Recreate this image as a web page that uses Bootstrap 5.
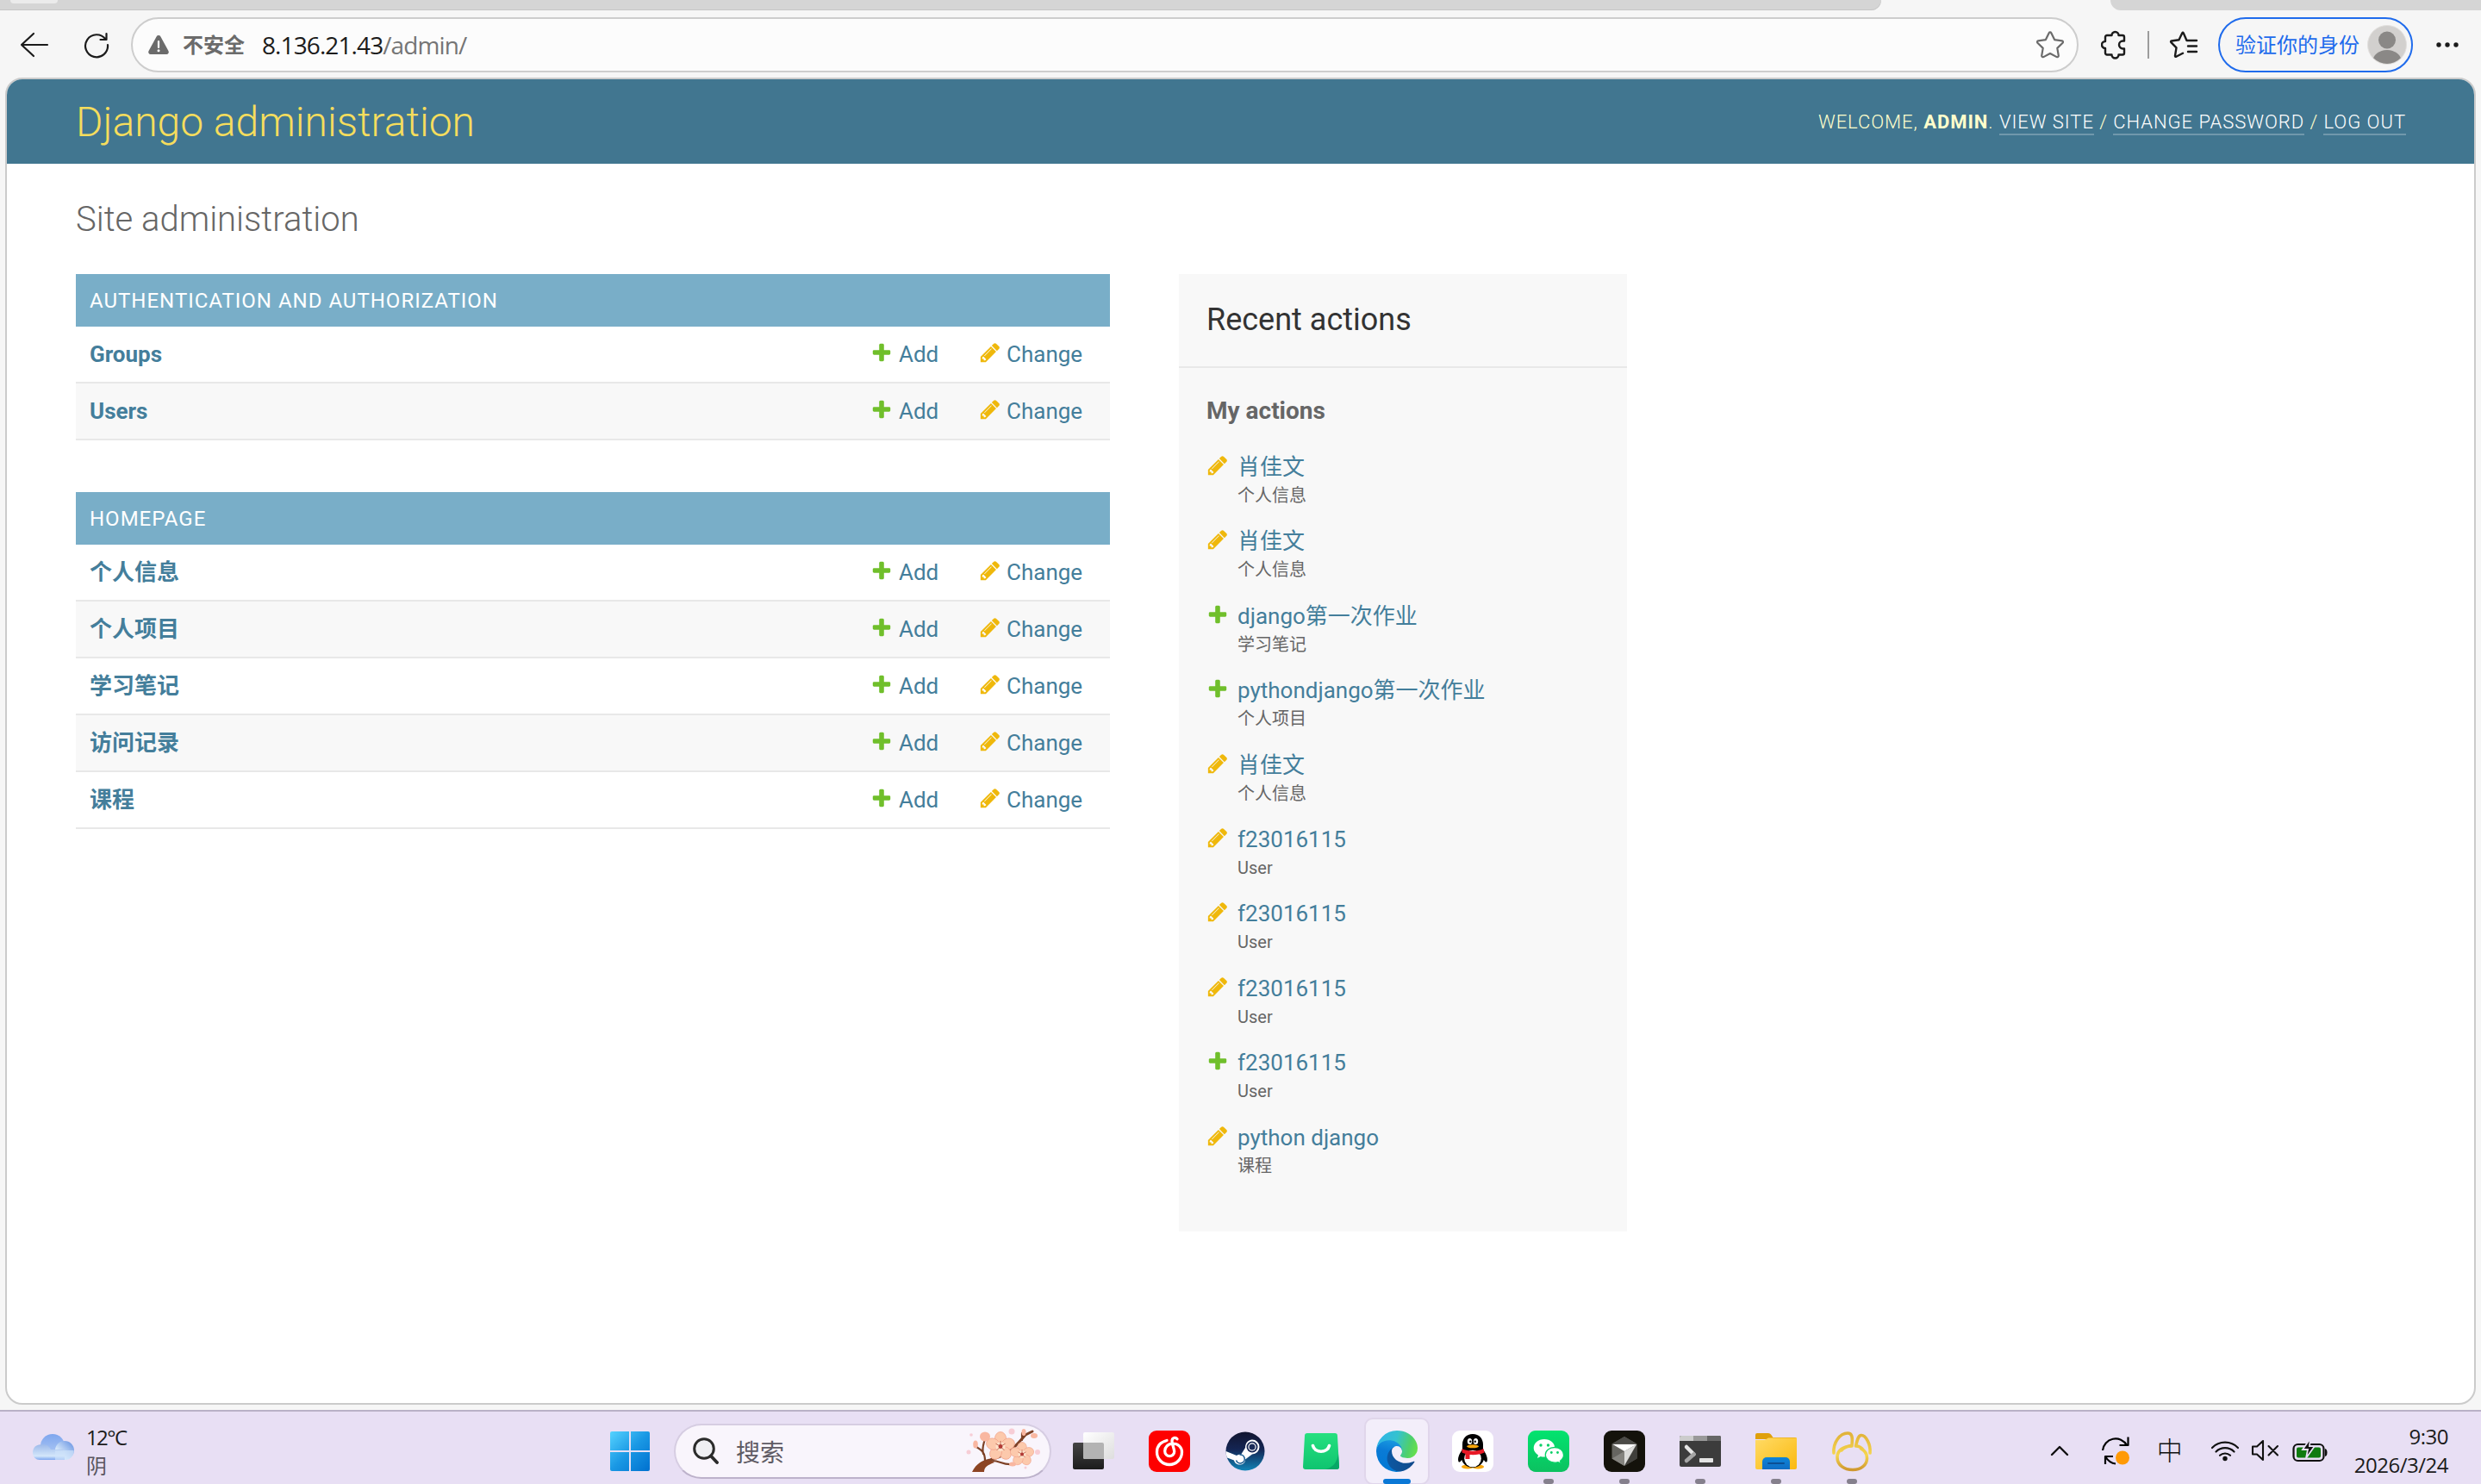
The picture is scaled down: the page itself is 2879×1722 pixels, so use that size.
<!DOCTYPE html>
<html lang="zh-CN">
<head>
<meta charset="utf-8">
<title>Site administration | Django site admin</title>
<meta name="viewport" content="width=device-width, initial-scale=1">
<link href="https://cdn.jsdelivr.net/npm/bootstrap@5.3.0/dist/css/bootstrap.min.css" rel="stylesheet">
<script defer src="https://cdn.jsdelivr.net/npm/bootstrap@5.3.0/dist/js/bootstrap.bundle.min.js"></script>
<style>
html,body{height:1722px;overflow:hidden}
body{font-family:Roboto,"Noto Sans CJK SC",sans-serif;background:#f6f6f6;color:#333;font-size:26px;line-height:1.3}
svg{display:block;flex:none}
.ui{font-family:"Open Sans","Noto Sans CJK SC",sans-serif}
/* browser chrome */
.tabstrip{height:12px;background:#f6f6f6}
.strip-left{width:2183px;background:#d5d5d5;border-bottom-right-radius:12px;box-shadow:inset 0 -1px 0 #c6c6c6}
.strip-right{width:430px;background:#d5d5d5;border-bottom-left-radius:12px}
.old-tab{width:55px;height:4px;margin-left:12px;background:#ebebeb;border-radius:0 0 10px 10px}
.toolbar{height:78px;padding-top:2px}
.addr{width:2260px;height:64px;border:2px solid #cdcdcd;border-radius:32px;background:#fcfcfc;margin-left:24px;padding:0 14px 0 17px}
.insecure{font-size:24px;font-weight:700;color:#6b6b6b;margin-left:15px;line-height:32px}
.url{font-size:28px;letter-spacing:-.9px;color:#1b1b1b;margin-left:20px;line-height:36px}
.url span{color:#757575}
.profile{width:226px;height:64px;border:2px solid #1f6bec;border-radius:32px;color:#1f6bec;font-size:24px;padding:0 5px 0 18px;line-height:32px}
/* page frame */
.frame{height:1540px;margin:0 6px 0 6px;border:2px solid #cbcbcb;border-radius:20px;background:#fff;overflow:hidden}
.dj-header{height:98px;background:#417690;padding:2px 79px 0 80px;color:#ffc}
.dj-brand{font-size:48px;font-weight:300;color:#f5dd5d;line-height:56px}
.dj-tools{font-size:22px;font-weight:300;letter-spacing:.97px;line-height:28px}
.dj-tools b{font-weight:700}
.dj-tools a{color:#fff;text-decoration:none;border-bottom:2px solid rgba(255,255,255,.25);padding-bottom:1px}
.dj-content{padding:41px 80px}
.dj-title{font-size:40px;font-weight:300;color:#666;line-height:48px;margin:0 0 39px}
.app-list{width:1200px}
.app-box{margin-bottom:60px}
.app-cap{height:61px;background:#79aec8;color:#fff;font-size:24px;letter-spacing:1px;padding:1px 16px 0;font-weight:400;margin:0}
.app-row{height:66px;border-bottom:2px solid #e8e8e8;padding:2px 0 0 16px}
.app-row:nth-child(odd){background:#f8f8f8}
.app-row a,.act a{color:#447e9b;text-decoration:none}
.app-row .nm{font-weight:700}
.lnk{gap:7px}
.lnk-add{width:126px}.lnk-chg{width:152px;gap:6px}
.ic{width:26px;height:26px}
.lnk .ic{margin-top:-5px}
.side{width:520px;height:1111px;background:#f8f8f8;margin-left:80px}
.side-h{height:109px;border-bottom:2px solid #e8e8e8;padding:1px 32px 0;font-size:36px;font-weight:400;color:#333;margin:0}
.side-b{padding:31px 32px 0}
.side-b h3{font-size:28px;font-weight:700;color:#666;line-height:38px;margin:0 0 28px}
.act{height:86.4px;gap:10px}
.act .ic{margin-top:3px}
.act a{display:block;font-size:26px;line-height:36px;height:36px}
.act .kind{font-size:20px;line-height:31px;color:#666}
/* taskbar */
.taskbar{height:86px;border-top:2px solid #b9b1c6;background:#e8dff4;margin-top:6px}
.weather{width:687px;padding-left:38px;gap:14px}
.two-line{font-size:24px;line-height:33px;color:#1b1b1b;letter-spacing:-.5px}
.weather .two-line{letter-spacing:-1.6px}
.two-line .dim{color:#5a5660}
.cell{width:88px;height:84px;padding-top:8px}
.searchbox{width:438px;height:64px;border:2px solid #d6cde2;border-bottom-color:#bdb2cb;border-radius:32px;background:#f9f5fc;margin:14px 5px 6px 7px;padding:0 9px 0 20px;font-size:28px;color:#5f5b64}
.searchbox span{margin-left:20px;line-height:36px;padding-top:2px}
.plate{left:6px;top:7px;width:76px;height:78px;background:#f3eefa;border:2px solid #e0d6eb;border-radius:10px}
.run{left:38px;bottom:0;width:12px;height:6px;border-radius:3px;background:#85808d}
.run-on{left:28px;bottom:0;width:32px;height:6px;border-radius:3px;background:#0a78d6}
.ime{font-size:30px;font-weight:300;line-height:36px;color:#111}
.tray{padding:6px 38px 0 0}
</style>
</head>
<body class="d-flex flex-column">
<svg width="0" height="0" class="position-absolute">
<defs>
<symbol id="add" viewBox="0 0 1792 1792"><path fill="#70bf2b" d="M1600 796v192q0 40-28 68t-68 28h-416v416q0 40-28 68t-68 28h-192q-40 0-68-28t-28-68v-416h-416q-40 0-68-28t-28-68v-192q0-40 28-68t68-28h416v-416q0-40 28-68t68-28h192q40 0 68 28t28 68v416h416q40 0 68 28t28 68z"/></symbol>
<symbol id="chg" viewBox="0 0 1792 1792"><path fill="#efb80b" d="M491 1536l91-91-235-235-91 91v107h128v128h107zm523-928q0-22-22-22-10 0-17 7l-542 542q-7 7-7 17 0 22 22 22 10 0 17-7l542-542q7-7 7-17zm-54-192l416 416-832 832h-416v-416zm683 96q0 53-37 90l-166 166-416-416 166-165q36-38 90-38 53 0 91 38l235 234q37 39 37 91z"/></symbol>
<symbol id="petals" viewBox="-16 -16 32 32"><g fill="#fcc9ac" stroke="#f2a48c" stroke-width=".7"><ellipse cy="-8.500" rx="6" ry="7"/><ellipse cy="-8.500" rx="6" ry="7" transform="rotate(72)"/><ellipse cy="-8.500" rx="6" ry="7" transform="rotate(144)"/><ellipse cy="-8.500" rx="6" ry="7" transform="rotate(216)"/><ellipse cy="-8.500" rx="6" ry="7" transform="rotate(288)"/></g><circle r="5" fill="#fde2cb"/><path d="M0 0V-6M0 0L5-3M0 0L4 4M0 0L-4 4M0 0L-5-3" stroke="#b5533f" stroke-width=".8"/><circle r="2.200" fill="#b23a35"/></symbol>
<linearGradient id="gw" gradientUnits="userSpaceOnUse" x1="0" y1="0" x2="46" y2="46"><stop offset="0" stop-color="#55d3ff"/><stop offset=".5" stop-color="#1a98e4"/><stop offset="1" stop-color="#0070cf"/></linearGradient>
<linearGradient id="gcl" x1="0" y1="0" x2="0" y2="1"><stop offset="0" stop-color="#7ea6ee"/><stop offset="1" stop-color="#b5cdf5"/></linearGradient>
<linearGradient id="gcl2" x1="0" y1="0" x2="0" y2="1"><stop offset="0" stop-color="#9cb9ea"/><stop offset=".75" stop-color="#d3e6fa"/><stop offset="1" stop-color="#7da6f0"/></linearGradient>
<linearGradient id="gcl3" x1="1" y1="0" x2="0" y2="1"><stop offset="0" stop-color="#5f8de0"/><stop offset=".7" stop-color="#d9eafb"/></linearGradient>
<linearGradient id="gst" x1="0" y1="0" x2="0" y2="1"><stop offset="0" stop-color="#12152f"/><stop offset=".45" stop-color="#142553"/><stop offset="1" stop-color="#1086b9"/></linearGradient>
<linearGradient id="gbag" x1="0" y1="0" x2="0" y2="1"><stop offset="0" stop-color="#26e07f"/><stop offset="1" stop-color="#0fc470"/></linearGradient>
<linearGradient id="ge1" x1="0" y1="0" x2="1" y2="0"><stop offset="0" stop-color="#0c59a4"/><stop offset="1" stop-color="#114a8b"/></linearGradient>
<linearGradient id="ge2" x1=".6" y1="0" x2=".4" y2="1"><stop offset="0" stop-color="#1b9de2"/><stop offset=".4" stop-color="#0a7bd6"/><stop offset="1" stop-color="#0078d4"/></linearGradient>
<linearGradient id="ge3" x1="0" y1=".4" x2="1" y2=".6"><stop offset="0" stop-color="#2fb4e8"/><stop offset=".45" stop-color="#35c2cf"/><stop offset=".8" stop-color="#4fd06b"/><stop offset="1" stop-color="#66e04c"/></linearGradient>
<linearGradient id="gwx" x1="0" y1="0" x2="0" y2="1"><stop offset="0" stop-color="#02e36f"/><stop offset="1" stop-color="#0cc160"/></linearGradient>
<linearGradient id="gfo" x1="0" y1="0" x2="1" y2="1"><stop offset="0" stop-color="#ffdb66"/><stop offset="1" stop-color="#fbb90f"/></linearGradient>
<linearGradient id="gbl" x1="0" y1="0" x2="0" y2="1"><stop offset="0" stop-color="#0d84d8"/><stop offset="1" stop-color="#0f6cc4"/></linearGradient>
<linearGradient id="gnv" x1="0" y1="0" x2="0" y2="1"><stop offset="0" stop-color="#e0b23a"/><stop offset=".6" stop-color="#f6d64f"/><stop offset="1" stop-color="#cf9830"/></linearGradient>
<linearGradient id="gtv" x1="0" y1="0" x2="0" y2="1"><stop offset="0" stop-color="#444"/><stop offset="1" stop-color="#1c1c1c"/></linearGradient>
<linearGradient id="gtw" x1="0" y1="0" x2="1" y2="1"><stop offset="0" stop-color="#fff"/><stop offset="1" stop-color="#dedede"/></linearGradient>
</defs>
</svg>

<!-- tab strip -->
<div class="tabstrip d-flex justify-content-between flex-shrink-0">
  <div class="strip-left"><div class="old-tab"></div></div>
  <div class="strip-right"></div>
</div>

<!-- address toolbar -->
<div class="toolbar ui d-flex align-items-center flex-shrink-0">
  <svg style="margin-left:22px" width="36" height="32" viewBox="0 0 36 32" fill="none" stroke="#1b1b1b" stroke-width="2.200" stroke-linecap="round" stroke-linejoin="round"><path d="M17 3L3 16l14 13M3 16h30"/></svg>
  <svg style="margin-left:38px" width="32" height="32" viewBox="0 0 32 32" fill="none" stroke="#1b1b1b" stroke-width="2.200" stroke-linecap="round" stroke-linejoin="round"><path d="M26.500 9.500A13 13 0 1 0 29 16M27.500 3v7h-7"/></svg>
  <div class="addr d-flex align-items-center">
    <svg width="26" height="24" viewBox="0 0 26 24"><path d="M10.600 2.500a2.700 2.700 0 0 1 4.800 0l9 16.500a2.600 2.600 0 0 1-2.300 4H3.900a2.600 2.600 0 0 1-2.300-4z" fill="#6b6b6b"/><path d="M13 8v7" stroke="#fff" stroke-width="2.200" stroke-linecap="round"/><circle cx="13" cy="18.700" r="1.500" fill="#fff"/></svg>
    <div class="insecure">不安全</div>
    <div class="url">8.136.21.43<span>/admin/</span></div>
    <svg class="ms-auto" width="34" height="34" viewBox="0 0 34 34" fill="none" stroke="#6b6b6b" stroke-width="2.200" stroke-linejoin="round"><path d="M15.700 3.200a1.500 1.500 0 0 1 2.600 0l3.800 7.900 8.700 1.200a1.500 1.500 0 0 1 .8 2.500l-6.300 6.100 1.500 8.700a1.500 1.500 0 0 1-2.100 1.500L17 27l-7.700 4.100a1.500 1.500 0 0 1-2.100-1.500l1.500-8.700-6.300-6.100a1.500 1.500 0 0 1 .8-2.500l8.700-1.200z"/></svg>
  </div>
  <svg style="margin-left:26px" width="30" height="34" viewBox="0 -1 30 34" fill="none" stroke="#1b1b1b" stroke-width="2.400" stroke-linejoin="round"><path d="M7 5h5.500a4 4 0 0 1 8 0H25a2 2 0 0 1 2 2v4.500h-1.500a4.500 4.500 0 0 0 0 9H27v5a2 2 0 0 1-2 2h-4.500a4 4 0 0 1-8 0H7a2 2 0 0 1-2-2V20a4 4 0 0 1 0-8V7a2 2 0 0 1 2-2z"/></svg>
  <div style="margin-left:24px;width:2px;height:32px;background:#9d9d9d"></div>
  <svg style="margin-left:23px" width="34" height="34" viewBox="0 0 34 34" fill="none" stroke="#1b1b1b" stroke-width="2.400" stroke-linecap="round" stroke-linejoin="round"><path d="M32 12H20.500L16.800 3.500q-.8-1.500-1.600 0l-3.700 7.800-8.600 1.200q-1.400.3-.5 1.700l6.100 6.200-1.500 9.200q-.1 1.500 1.200 1.200L16 26.800M22 18.500h10M22 25h10"/></svg>
  <div class="profile d-flex align-items-center justify-content-between" style="margin-left:23px">
    <span>验证你的身份</span>
    <svg width="46" height="46" viewBox="0 0 46 46"><defs><clipPath id="av"><circle cx="23" cy="23" r="22"/></clipPath></defs><circle cx="23" cy="23" r="22.500" fill="#d2d0ce" stroke="#e2e0de"/><g clip-path="url(#av)" fill="#8a8886"><circle cx="23" cy="17.500" r="10"/><ellipse cx="23" cy="42" rx="16.500" ry="13"/></g></svg>
  </div>
  <svg style="margin-left:25px" width="30" height="8" viewBox="0 0 30 8" fill="#1b1b1b"><circle cx="5" cy="4" r="2.700"/><circle cx="15" cy="4" r="2.700"/><circle cx="25" cy="4" r="2.700"/></svg>
</div>

<!-- page -->
<main class="frame flex-shrink-0">
  <header class="dj-header d-flex align-items-center justify-content-between">
    <div class="dj-brand">Django administration</div>
    <div class="dj-tools text-uppercase">Welcome, <b>admin</b>. <a href="#">View site</a> / <a href="#">Change password</a> / <a href="#">Log out</a></div>
  </header>
  <div class="dj-content">
    <h1 class="dj-title">Site administration</h1>
    <div class="d-flex align-items-start">
      <div class="app-list">
        <section class="app-box">
          <h2 class="app-cap d-flex align-items-center text-uppercase">Authentication and Authorization</h2>
          <div class="app-row d-flex align-items-center"><a class="nm me-auto" href="#">Groups</a><a class="lnk lnk-add d-flex align-items-center" href="#"><svg class="ic"><use href="#add"/></svg>Add</a><a class="lnk lnk-chg d-flex align-items-center" href="#"><svg class="ic"><use href="#chg"/></svg>Change</a></div>
          <div class="app-row d-flex align-items-center"><a class="nm me-auto" href="#">Users</a><a class="lnk lnk-add d-flex align-items-center" href="#"><svg class="ic"><use href="#add"/></svg>Add</a><a class="lnk lnk-chg d-flex align-items-center" href="#"><svg class="ic"><use href="#chg"/></svg>Change</a></div>
        </section>
        <section class="app-box">
          <h2 class="app-cap d-flex align-items-center text-uppercase">Homepage</h2>
          <div class="app-row d-flex align-items-center"><a class="nm me-auto" href="#">个人信息</a><a class="lnk lnk-add d-flex align-items-center" href="#"><svg class="ic"><use href="#add"/></svg>Add</a><a class="lnk lnk-chg d-flex align-items-center" href="#"><svg class="ic"><use href="#chg"/></svg>Change</a></div>
          <div class="app-row d-flex align-items-center"><a class="nm me-auto" href="#">个人项目</a><a class="lnk lnk-add d-flex align-items-center" href="#"><svg class="ic"><use href="#add"/></svg>Add</a><a class="lnk lnk-chg d-flex align-items-center" href="#"><svg class="ic"><use href="#chg"/></svg>Change</a></div>
          <div class="app-row d-flex align-items-center"><a class="nm me-auto" href="#">学习笔记</a><a class="lnk lnk-add d-flex align-items-center" href="#"><svg class="ic"><use href="#add"/></svg>Add</a><a class="lnk lnk-chg d-flex align-items-center" href="#"><svg class="ic"><use href="#chg"/></svg>Change</a></div>
          <div class="app-row d-flex align-items-center"><a class="nm me-auto" href="#">访问记录</a><a class="lnk lnk-add d-flex align-items-center" href="#"><svg class="ic"><use href="#add"/></svg>Add</a><a class="lnk lnk-chg d-flex align-items-center" href="#"><svg class="ic"><use href="#chg"/></svg>Change</a></div>
          <div class="app-row d-flex align-items-center"><a class="nm me-auto" href="#">课程</a><a class="lnk lnk-add d-flex align-items-center" href="#"><svg class="ic"><use href="#add"/></svg>Add</a><a class="lnk lnk-chg d-flex align-items-center" href="#"><svg class="ic"><use href="#chg"/></svg>Change</a></div>
        </section>
      </div>
      <aside class="side">
        <h2 class="side-h d-flex align-items-center">Recent actions</h2>
        <div class="side-b">
          <h3>My actions</h3>
          <ul class="list-unstyled m-0">
            <li class="act d-flex"><svg class="ic"><use href="#chg"/></svg><div><a href="#">肖佳文</a><div class="kind">个人信息</div></div></li>
            <li class="act d-flex"><svg class="ic"><use href="#chg"/></svg><div><a href="#">肖佳文</a><div class="kind">个人信息</div></div></li>
            <li class="act d-flex"><svg class="ic"><use href="#add"/></svg><div><a href="#">django第一次作业</a><div class="kind">学习笔记</div></div></li>
            <li class="act d-flex"><svg class="ic"><use href="#add"/></svg><div><a href="#">pythondjango第一次作业</a><div class="kind">个人项目</div></div></li>
            <li class="act d-flex"><svg class="ic"><use href="#chg"/></svg><div><a href="#">肖佳文</a><div class="kind">个人信息</div></div></li>
            <li class="act d-flex"><svg class="ic"><use href="#chg"/></svg><div><a href="#">f23016115</a><div class="kind">User</div></div></li>
            <li class="act d-flex"><svg class="ic"><use href="#chg"/></svg><div><a href="#">f23016115</a><div class="kind">User</div></div></li>
            <li class="act d-flex"><svg class="ic"><use href="#chg"/></svg><div><a href="#">f23016115</a><div class="kind">User</div></div></li>
            <li class="act d-flex"><svg class="ic"><use href="#add"/></svg><div><a href="#">f23016115</a><div class="kind">User</div></div></li>
            <li class="act d-flex"><svg class="ic"><use href="#chg"/></svg><div><a href="#">python django</a><div class="kind">课程</div></div></li>
          </ul>
        </div>
      </aside>
    </div>
  </div>
</main>

<!-- taskbar -->
<footer class="taskbar ui d-flex align-items-center flex-shrink-0">
  <div class="weather d-flex align-items-center">
    <svg width="48" height="38" viewBox="0 0 48 38"><circle cx="23" cy="17" r="14" fill="url(#gcl)"/><circle cx="37" cy="22" r="11" fill="url(#gcl3)"/><path d="M11 15a10 10 0 0 1 10 6h16v12H8a8 8 0 0 1-8-8q0-10 11-10z" fill="url(#gcl2)"/><path d="M26 22h21.500a10 10 0 0 1-8 11H26z" fill="#cfe3fa" opacity=".65"/></svg>
    <div class="two-line pt-2"><div>12°C</div><div class="dim">阴</div></div>
  </div>
  <div class="cell d-flex align-items-center justify-content-center">
    <svg width="46" height="46" viewBox="0 0 46 46" fill="url(#gw)"><path d="M2 0h20v22H0V2a2 2 0 0 1 2-2zM24 0h20a2 2 0 0 1 2 2v20H24zM0 24h22v22H2a2 2 0 0 1-2-2zM24 24h22v20a2 2 0 0 1-2 2H24z"/></svg>
  </div>
  <div class="searchbox d-flex align-items-center">
    <svg width="30" height="32" viewBox="0 0 30 32" fill="none" stroke="#2b2b2b" stroke-width="3" stroke-linecap="round"><circle cx="13" cy="13" r="11.300" fill="#efeff3"/><path d="M21 21.500l7 7.500" stroke-width="3.800"/></svg>
    <span>搜索</span>
    <svg class="ms-auto" width="90" height="54" viewBox="0 0 90 54"><g fill="none" stroke="#7d4126" stroke-linecap="round"><path d="M14 49c4-9 10-11 16-12 12-3 24-9 33-20l8-9 8-4" stroke-width="3"/><path d="M24 38c0-10-4-12-10-16M22 30c-2-8 1-12 2-18M33 38c8 0 12 5 22 4M67 14V6" stroke-width="2.200"/></g><path d="M9 51c5-10 12-14 21-14l5 3c-8 3-12 5-12 11z" fill="#8c4423"/><use href="#petals" x="23" y="4" width="38" height="35"/><use href="#petals" x="52" y="16" width="30" height="29"/><g fill="#f9b7a1"><ellipse cx="24" cy="10" rx="6" ry="5.500"/><ellipse cx="13" cy="19" rx="2.800" ry="4.500"/><ellipse cx="81" cy="9" rx="4" ry="3"/><ellipse cx="69" cy="5" rx="2.500" ry="4"/><ellipse cx="56" cy="42" rx="4" ry="2.500"/></g><g fill="#f7b3bd" opacity=".6"><circle cx="55" cy="4" r="3.500"/><circle cx="5" cy="28" r="2.500"/><circle cx="85" cy="28" r="3"/><circle cx="8" cy="8" r="1.800"/><circle cx="71" cy="46" r="1.500"/></g></svg>
  </div>
  <div class="cell d-flex align-items-center justify-content-center">
    <svg width="48" height="46" viewBox="0 0 48 46"><rect y="13" width="36" height="31" rx="2" fill="url(#gtv)"/><rect x="12" y="1" width="36" height="31" rx="2" fill="url(#gtw)"/><path d="M12 13h22a2 2 0 0 1 2 2v17H14a2 2 0 0 1-2-2z" fill="#b3b3b3"/></svg>
  </div>
  <div class="cell d-flex align-items-center justify-content-center">
    <svg width="48" height="48" viewBox="0 0 48 48"><rect width="48" height="48" rx="9" fill="#fe0000"/><g fill="none" stroke="#fff" stroke-width="3.300" stroke-linecap="round"><path d="M21 11.500C13 13.500 9.500 19 9.500 25a14.500 14.500 0 0 0 29 0c0-6-4.500-9.800-10.500-9.800-5.500 0-9.300 4-9.300 8.600 0 7.700 11 7.700 11 .5 0-3-2.700-8.500-2.700-12 0-4.500 4.300-4.800 6-2.500"/></g></svg>
  </div>
  <div class="cell d-flex align-items-center justify-content-center">
    <svg width="46" height="46" viewBox="0 0 46 46"><defs><clipPath id="sc"><circle cx="23" cy="23" r="22.500"/></clipPath></defs><g clip-path="url(#sc)"><rect width="46" height="46" fill="url(#gst)"/><path d="M-2 22l15 6q3-2 5-1l5-8c0-6 4-9.500 8-9.500a8.500 8.500 0 0 1 0 17l-8 6c0 4-3 6-6.500 6-3 0-6-2-6.500-5L-2 29z" fill="#fff"/><circle cx="31" cy="18" r="6.500" fill="#142553"/><circle cx="31" cy="18" r="4.700" fill="#fff"/><circle cx="31" cy="18" r="3.500" fill="#1a2b58"/><path d="M12.500 33.500a5 5 0 1 0 4-6.500" fill="none" stroke="#15598f" stroke-width="1.500"/></g></svg>
  </div>
  <div class="cell d-flex align-items-center justify-content-center">
    <svg width="42" height="42" viewBox="0 0 42 42"><path d="M5 0h32a3 3 0 0 1 3 3l2 36a3 3 0 0 1-3 3H3a3 3 0 0 1-3-3L2 3a3 3 0 0 1 3-3z" fill="url(#gbag)"/><path d="M41 24l1 15a3 3 0 0 1-3 3H26c9-2 14-9 15-18z" fill="#08a766"/><path d="M11.500 14.500c2 9 17 9 19 0" fill="none" stroke="#fff" stroke-width="3.600" stroke-linecap="round"/></svg>
  </div>
  <div class="cell position-relative d-flex align-items-center justify-content-center">
    <div class="plate position-absolute"></div>
    <svg class="position-relative" width="48" height="48" viewBox="0 0 256 256"><path fill="url(#ge1)" d="M231.070 190.540c-3.400 1.790-6.920 3.360-10.530 4.700a101.900 101.900 0 0 1-35.900 6.460c-47.320 0-88.540-32.550-88.540-74.320A31.480 31.480 0 0 1 112.500 100c-42.800 1.800-53.800 46.400-53.800 72.530 0 73.880 68.090 81.370 82.760 81.370 7.910 0 19.840-2.300 27-4.560l1.310-.44a128.340 128.340 0 0 0 66.600-52.800 4 4 0 0 0-5.300-5.560z"/><path fill="url(#ge2)" d="M105.730 241.420A79.200 79.200 0 0 1 83 220.080a80.720 80.720 0 0 1 29.500-120.040c3.120-1.470 8.450-4.130 15.540-4a32.350 32.350 0 0 1 25.690 13 31.880 31.880 0 0 1 6.360 18.660c0-.21 24.460-79.600-80-79.600-43.900 0-80 41.660-80 78.210a130.150 130.150 0 0 0 12.110 56 128 128 0 0 0 156.380 67.110 75.550 75.550 0 0 1-62.780-8z"/><path fill="url(#ge3)" d="M152.330 148.860c-.81 1.050-3.300 2.500-3.300 5.660 0 2.610 1.700 5.120 4.720 7.230 14.380 10 41.490 8.680 41.560 8.680a59.560 59.560 0 0 0 30.270-8.350 61.380 61.380 0 0 0 30.430-52.880c.26-22.410-8-37.310-11.340-43.910C223.460 23.840 177.720 0 128 0A128 128 0 0 0 0 126.200c.48-36.540 36.800-66.050 80-66.050 3.500 0 23.460.34 42 10.070 16.340 8.580 24.900 18.940 30.850 29.210 6.180 10.670 7.280 24.150 7.280 29.520s-2.740 13.330-7.800 19.910z"/></svg>
    <div class="run-on position-absolute"></div>
  </div>
  <div class="cell d-flex align-items-center justify-content-center">
    <svg width="48" height="48" viewBox="0 0 48 48"><rect width="48" height="48" rx="9" fill="#fff"/><ellipse cx="18" cy="42" rx="7" ry="2.500" fill="#f7a50a"/><ellipse cx="30" cy="42" rx="7" ry="2.500" fill="#f7a50a"/><path d="M24 4c7.500 0 12 5.500 12 12v6c3 4 5.500 9 4.800 13-.5 2.500-2 2-4-1C35 39.500 30 43 24 43s-11-3.500-12.800-9c-2 3-3.500 3.500-4 1C6.500 31 9 26 12 22v-6c0-6.500 4.500-12 12-12z" fill="#000"/><ellipse cx="24" cy="32.500" rx="9.800" ry="9.800" fill="#fff"/><path d="M11.500 21c7 3.500 18 3.500 25 0l1 4.500c-5 2.500-11 3-17 2.600V33h-5v-6l-4-1.500z" fill="#e81926"/><ellipse cx="20.500" cy="12.500" rx="2.700" ry="3.600" fill="#fff"/><ellipse cx="27.500" cy="12.500" rx="2.700" ry="3.600" fill="#fff"/><circle cx="21.300" cy="12.800" r="1.200"/><circle cx="26.700" cy="12.800" r="1.200"/><ellipse cx="24" cy="18.300" rx="7" ry="2" fill="#f7a50a"/></svg>
  </div>
  <div class="cell position-relative d-flex align-items-center justify-content-center">
    <svg width="48" height="48" viewBox="0 0 48 48"><rect width="48" height="48" rx="9" fill="url(#gwx)"/><path d="M19 10c7 0 12.300 4.500 12.300 10.300S26 30.600 19 30.600c-1.500 0-3-.2-4.300-.6L11 32l1-3.500c-3.300-2-5.300-4.900-5.300-8.200C6.700 14.500 12 10 19 10z" fill="#fff"/><path d="M31 19.500c6 0 10.500 4 10.500 8.800 0 2.900-1.500 5.300-4 7l.8 3-3.300-1.700a13 13 0 0 1-4 .6c-6 0-10.700-4-10.700-8.900s4.700-8.800 10.700-8.800z" fill="#fff" stroke="#07d367" stroke-width="1.300"/><g fill="#08cf66"><circle cx="15" cy="17" r="1.700"/><circle cx="23.500" cy="17" r="1.700"/><circle cx="27.300" cy="25.500" r="1.400"/><circle cx="34.500" cy="25.500" r="1.400"/></g></svg>
    <div class="run position-absolute"></div>
  </div>
  <div class="cell position-relative d-flex align-items-center justify-content-center">
    <svg width="48" height="48" viewBox="0 0 48 48"><rect width="48" height="48" rx="9" fill="#14120b"/><path d="M24 7l14.500 8.500v17L24 41 9.500 32.500v-17z" fill="#666560"/><path d="M24 7l14.500 8.500h-29z" fill="#4c4b47"/><path d="M9.500 32.500L24 24v17z" fill="#85847f"/><path d="M38.500 32.500V16L24 41z" fill="#403f3b"/><path d="M10.500 16h27.500L24 24z" fill="#fff"/><path d="M38 16L24 40.500V24z" fill="#dcdcda"/></svg>
    <div class="run position-absolute"></div>
  </div>
  <div class="cell position-relative d-flex align-items-center justify-content-center">
    <svg width="48" height="36" viewBox="0 0 48 36"><rect width="48" height="36" rx="2" fill="#3c3c3c"/><path d="M2 0h14v6H0V2a2 2 0 0 1 2-2z" fill="#ccc"/><path d="M16 0h16v6H16z" fill="#999"/><path d="M32 0h14a2 2 0 0 1 2 2v4H32z" fill="#666"/><path d="M8 13l8.500 8.500" stroke="#e6e6e6" stroke-width="4.500" stroke-linecap="round"/><path d="M8 29l8.500-7.500" stroke="#a5a5a5" stroke-width="4.500" stroke-linecap="round"/><rect x="23" y="26" width="16" height="5" rx=".8" fill="#e3e3e3"/></svg>
    <div class="run position-absolute"></div>
  </div>
  <div class="cell position-relative d-flex align-items-center justify-content-center">
    <svg width="48" height="42" viewBox="0 0 48 42"><path d="M2 0h13q2 0 3 1.500L20.500 5H46a2 2 0 0 1 2 2H0V2a2 2 0 0 1 2-2z" fill="#dfa00b"/><path d="M0 8h9q2 0 3.500-1L15 5.500h33V40a2 2 0 0 1-2 2H2a2 2 0 0 1-2-2z" fill="url(#gfo)"/><path d="M8 42v-9a5 5 0 0 1 5-5h22a5 5 0 0 1 5 5v9z" fill="url(#gbl)"/><path d="M15 35h18" stroke="#0b4f94" stroke-width="2" stroke-linecap="round"/></svg>
    <div class="run position-absolute"></div>
  </div>
  <div class="cell position-relative d-flex align-items-center justify-content-center">
    <svg width="48" height="48" viewBox="0 0 48 48" fill="none" stroke="url(#gnv)" stroke-width="3.600" stroke-linecap="round" stroke-linejoin="round"><path d="M3 26C2 14 10 3 19 3c5 0 6 4 5 14-5 1-9 2-12 6M45 26C46 16 40 5 34.500 5.500 31 6 30 12 28.500 18c4 0 7 2 9 5M24 18c-10 0-17 5-17 13 0 9 8 14.500 18 14.500 9 0 16.500-5 16.500-13.500 0-5-3-9-7-11"/></svg>
    <div class="run position-absolute"></div>
  </div>

  <!-- system tray -->
  <div class="tray d-flex align-items-center ms-auto">
    <svg width="22" height="14" viewBox="0 0 22 14" fill="none" stroke="#111" stroke-width="2.400" stroke-linecap="round" stroke-linejoin="round"><path d="M2 12l9-9 9 9"/></svg>
    <svg style="margin-left:37px" width="34" height="34" viewBox="0 0 34 34" fill="none" stroke="#000" stroke-width="2.200" stroke-linejoin="round"><path d="M2 17A15 15 0 0 1 30 11M31.500 1.500V11H21.500M5 33v-9h9M5 24c3 5 7 8 12 8.500"/><circle cx="25" cy="25.500" r="8" fill="#ff9a05" stroke="none"/></svg>
    <div class="ime" style="margin-left:31px">中</div>
    <svg style="margin-left:32px" width="34" height="26" viewBox="0 0 34 26" fill="none" stroke="#111" stroke-width="2.200" stroke-linecap="round"><path d="M2 10a21 21 0 0 1 30 0M6.500 14.500a15 15 0 0 1 21 0M11 18.800a9 9 0 0 1 12 0"/><circle cx="17" cy="22.500" r="2.700" fill="#111" stroke="none"/></svg>
    <svg style="margin-left:13px" width="34" height="26" viewBox="0 0 34 26" fill="none" stroke="#111" stroke-width="2.100" stroke-linecap="round" stroke-linejoin="round"><path d="M2 8.500h5L14 2v22l-7-6.500H2zM20.500 8l10.500 10.500M31 8L20.500 18.500"/></svg>
    <svg style="margin-left:14px" width="42" height="30" viewBox="0 0 42 30"><rect x="1.500" y="8" width="35" height="19" rx="5" fill="none" stroke="#111" stroke-width="2.200"/><rect x="5" y="11.500" width="28" height="12" rx="2" fill="#0f7b0f"/><path d="M38 13q2.500.5 2.500 4.500T38 22z" fill="#111"/><path d="M21 1l-9 13h6l-2 10 10-14h-6z" fill="#111" stroke="#e8dff4" stroke-width="1.800"/></svg>
    <div class="two-line text-end" style="margin-left:30px"><div>9:30</div><div>2026/3/24</div></div>
  </div>
</footer>
</body>
</html>
